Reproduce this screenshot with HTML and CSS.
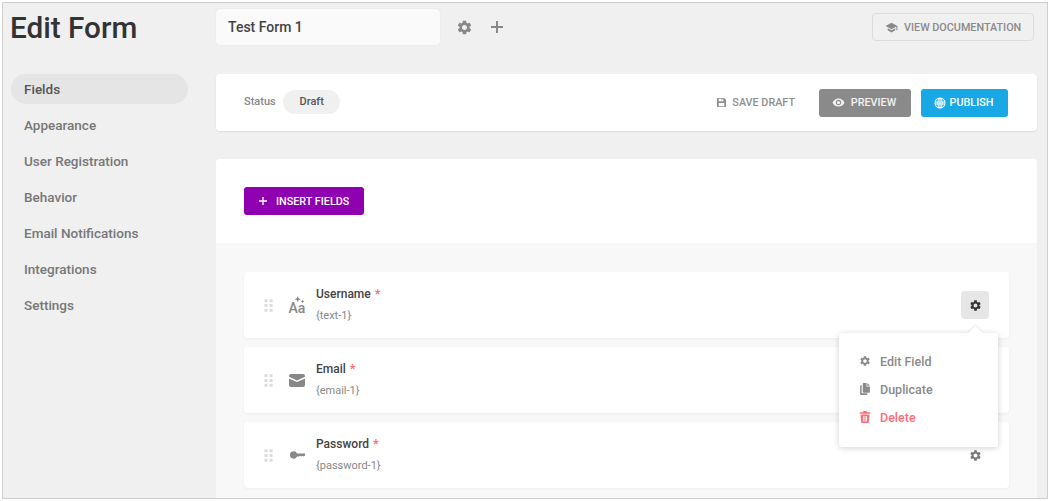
FILE: index.html
```html
<!DOCTYPE html>
<html lang="en">
<head>
<meta charset="utf-8">
<title>Edit Form</title>
<link rel="stylesheet" href="styles.css">
</head>
<body>
<svg class="defs" width="0" height="0" aria-hidden="true">
  <symbol id="gear" viewBox="0 0 24 24"><path d="M19.14 12.94c.04-.3.06-.61.06-.94 0-.32-.02-.64-.07-.94l2.03-1.58c.18-.14.23-.41.12-.61l-1.92-3.32c-.12-.22-.37-.29-.59-.22l-2.39.96c-.5-.38-1.03-.7-1.62-.94l-.36-2.54c-.04-.24-.24-.41-.48-.41h-3.84c-.24 0-.43.17-.47.41l-.36 2.54c-.59.24-1.13.57-1.62.94l-2.39-.96c-.22-.08-.47 0-.59.22L2.74 8.87c-.12.21-.08.47.12.61l2.03 1.58c-.05.3-.09.63-.09.94s.02.64.07.94l-2.03 1.58c-.18.14-.23.41-.12.61l1.92 3.32c.12.22.37.29.59.22l2.39-.96c.5.38 1.03.7 1.62.94l.36 2.54c.05.24.24.41.48.41h3.84c.24 0 .44-.17.47-.41l.36-2.54c.59-.24 1.13-.56 1.62-.94l2.39.96c.22.08.47 0 .59-.22l1.92-3.32c.12-.22.07-.47-.12-.61l-2.01-1.58zM12 15.6c-1.98 0-3.6-1.62-3.6-3.6s1.62-3.6 3.6-3.6 3.6 1.62 3.6 3.6-1.62 3.6-3.6 3.6z"/></symbol>
  <symbol id="plus" viewBox="0 0 12 12"><path d="M5 0h2v5h5v2H7v5H5V7H0V5h5z"/></symbol>
  <symbol id="cap" viewBox="0 0 24 24"><path d="M5 13.18v4L12 21l7-3.82v-4L12 17l-7-3.82zM12 3L1 9l11 6 9-4.91V17h2V9L12 3z"/></symbol>
  <symbol id="save" viewBox="0 0 24 24"><path fill-rule="evenodd" d="M4 2h14l4 4v14a2 2 0 0 1-2 2H4a2 2 0 0 1-2-2V4a2 2 0 0 1 2-2zm2 2v5h10V4h-2v3h-2V4zm0 9v7h12v-7z"/></symbol>
  <symbol id="eye" viewBox="0 0 24 24"><path d="M12 4.500C7 4.500 2.730 7.610 1 12c1.730 4.390 6 7.500 11 7.500s9.270-3.110 11-7.500c-1.730-4.390-6-7.500-11-7.500zM12 17c-2.760 0-5-2.240-5-5s2.240-5 5-5 5 2.240 5 5-2.240 5-5 5zm0-8c-1.660 0-3 1.340-3 3s1.340 3 3 3 3-1.340 3-3-1.340-3-3-3z"/></symbol>
  <symbol id="globe" viewBox="0 0 24 24"><path fill-rule="evenodd" d="M12 1a11 11 0 1 1 0 22 11 11 0 0 1 0-22zM8.900 3.600A9 9 0 0 0 3.200 9h3.700c.3-2 1-3.900 2-5.400zM11 3.200C9.900 4.700 9.100 6.700 8.900 9H11zM13 3.200V9h2.100c-.2-2.300-1-4.300-2.100-5.800zM15.100 3.600c1 1.500 1.700 3.400 2 5.400h3.700a9 9 0 0 0-5.700-5.400zM3 11v2h3.700a22 22 0 0 1 0-2zM8.700 11a18 18 0 0 0 0 2H11v-2zM13 11v2h2.300a18 18 0 0 0 0-2zM17.300 11a22 22 0 0 1 0 2H21v-2zM3.200 15a9 9 0 0 0 5.700 5.400c-1-1.500-1.700-3.400-2-5.400zM8.900 15c.2 2.300 1 4.300 2.100 5.800V15zM13 15v5.800c1.100-1.500 1.900-3.500 2.100-5.800zM17.100 15c-.3 2-1 3.900-2 5.400a9 9 0 0 0 5.700-5.400z"/></symbol>
  <symbol id="grip" viewBox="0 0 10 16"><path d="M.5 1h3.400v3.400H.5zM6.100 1h3.400v3.400H6.100zM.5 6.300h3.400v3.400H.5zM6.100 6.300h3.400v3.400H6.100zM.5 11.600h3.400V15H.5zM6.100 11.600h3.400V15H6.100z"/></symbol>
  <symbol id="sparkle" viewBox="0 0 12 10"><path d="M4 0l1 2.500L7.500 3.500 5 4.500 4 7 3 4.500.5 3.500 3 2.500zM9.500 4l.6 1.400 1.400.6-1.400.6-.6 1.400-.6-1.400L7.500 6l1.400-.6z"/></symbol>
  <symbol id="mail" viewBox="0 0 16 13"><path d="M2 0h12a2 2 0 0 1 2 2v.8L8 6.400 0 2.800V2a2 2 0 0 1 2-2zM0 4.400l8 3.600 8-3.600V11a2 2 0 0 1-2 2H2a2 2 0 0 1-2-2z"/></symbol>
  <symbol id="key" viewBox="0 0 16 8"><path d="M3.800 0a4 4 0 0 1 3.700 2.500H16v2.200l-1.500 1-1.200-.8-1.200.8-1.200-.8-1.200.8H7.500A4 4 0 1 1 3.800 0z"/></symbol>
  <symbol id="copy" viewBox="0 0 14 16"><path d="M5 0h4v4.500h4.500V12a1 1 0 0 1-1 1H5a1 1 0 0 1-1-1V1a1 1 0 0 1 1-1zM10 0l3.500 3.500H10zM2.500 3v10.500H10V16H1.500a1 1 0 0 1-1-1V4a1 1 0 0 1 1-1z"/></symbol>
  <symbol id="trash" viewBox="0 0 14 16"><path fill-rule="evenodd" d="M5 0h4l.7 1.500H14v2H0v-2h4.300zM1 4.500h12l-.8 10.300a1.300 1.300 0 0 1-1.300 1.200H3.100a1.300 1.300 0 0 1-1.300-1.200zM4.300 6.500l.3 7.500h1.200l-.3-7.500zM6.400 6.500V14h1.200V6.500zM8.500 6.500L8.200 14h1.200l.3-7.500z"/></symbol>
</svg>

<div class="frame">
  <aside class="sidebar">
    <h1 class="page-title">Edit Form</h1>
    <nav class="nav">
      <a class="nav-item is-active">Fields</a>
      <a class="nav-item">Appearance</a>
      <a class="nav-item">User Registration</a>
      <a class="nav-item">Behavior</a>
      <a class="nav-item">Email Notifications</a>
      <a class="nav-item">Integrations</a>
      <a class="nav-item">Settings</a>
    </nav>
  </aside>

  <main class="main">
    <header class="toolbar">
      <div class="name-input">Test Form 1</div>
      <svg class="tool-gear"><use href="#gear"/></svg>
      <svg class="tool-plus"><use href="#plus"/></svg>
      <button class="doc-btn"><svg class="doc-icon"><use href="#cap"/></svg>VIEW DOCUMENTATION</button>
    </header>

    <section class="status-card">
      <span class="status-label">Status</span>
      <span class="status-pill">Draft</span>
      <button class="save-btn"><svg class="btn-icon-save"><use href="#save"/></svg>SAVE DRAFT</button>
      <button class="btn btn-preview"><svg class="btn-icon-eye"><use href="#eye"/></svg>PREVIEW</button>
      <button class="btn btn-publish"><svg class="btn-icon-globe"><use href="#globe"/></svg>PUBLISH</button>
    </section>

    <section class="form-card">
      <div class="form-head">
        <button class="insert-btn"><svg class="insert-icon"><use href="#plus"/></svg>INSERT FIELDS</button>
      </div>
      <div class="form-body">
        <div class="field">
          <svg class="grip"><use href="#grip"/></svg>
          <span class="type-icon type-text"><svg class="sparkle"><use href="#sparkle"/></svg><span class="aa">Aa</span></span>
          <div class="field-text">
            <div class="field-label">Username <span class="req">*</span></div>
            <div class="field-tag">{text-1}</div>
          </div>
          <button class="field-gear is-open"><svg><use href="#gear"/></svg></button>
          <div class="menu">
            <div class="menu-item"><svg class="menu-icon"><use href="#gear"/></svg>Edit Field</div>
            <div class="menu-item"><svg class="menu-icon"><use href="#copy"/></svg>Duplicate</div>
            <div class="menu-item is-danger"><svg class="menu-icon"><use href="#trash"/></svg>Delete</div>
          </div>
        </div>
        <div class="field">
          <svg class="grip"><use href="#grip"/></svg>
          <span class="type-icon"><svg class="mail"><use href="#mail"/></svg></span>
          <div class="field-text">
            <div class="field-label">Email <span class="req">*</span></div>
            <div class="field-tag">{email-1}</div>
          </div>
          <button class="field-gear"><svg><use href="#gear"/></svg></button>
        </div>
        <div class="field">
          <svg class="grip"><use href="#grip"/></svg>
          <span class="type-icon"><svg class="key"><use href="#key"/></svg></span>
          <div class="field-text">
            <div class="field-label">Password <span class="req">*</span></div>
            <div class="field-tag">{password-1}</div>
          </div>
          <button class="field-gear"><svg><use href="#gear"/></svg></button>
        </div>
      </div>
    </section>
  </main>
</div>
</body>
</html>
```
FILE: styles.css
```css
* { box-sizing: border-box; }
html, body { margin: 0; padding: 0; height: 100%; background: #fff; overflow: hidden; }
body { font-family: Roboto, "Liberation Sans", sans-serif; padding: 2px; }
.defs { position: absolute; }
button { font-family: inherit; border: 0; cursor: pointer; }
svg { display: block; fill: currentColor; flex: none; }

.frame {
  height: 497px;
  display: flex;
  background: #f0f0f0;
  border: 1px solid #cfcfcf;
  overflow: hidden;
  padding-right: 10px;
}

.sidebar { width: 213px; flex: none; padding-left: 8px; }
.page-title {
  margin: 7px 0 0 -1px;
  font-size: 29.700px;
  line-height: 36px;
  font-weight: 500;
  color: #333;
}
.nav { margin-top: 28px; display: flex; flex-direction: column; gap: 6px; width: 177px; }
.nav-item {
  height: 30px;
  line-height: 30px;
  padding-left: 13px;
  border-radius: 15px;
  font-size: 13.500px;
  font-weight: 500;
  color: #777;
}
.nav-item.is-active { background: #e5e5e5; color: #555; }

.main { flex: 1; min-width: 0; }
.toolbar { display: flex; align-items: center; height: 36px; margin-top: 6px; }
.name-input {
  width: 224px;
  height: 36px;
  line-height: 36px;
  padding-left: 12px;
  background: #fafafa;
  border-radius: 4px;
  box-shadow: 0 0 1px rgba(0,0,0,.15);
  font-size: 14px;
  font-weight: 500;
  color: #444;
}
.tool-gear { width: 17px; height: 17px; margin-left: 16px; color: #888; }
.tool-plus { width: 12px; height: 12px; margin-left: 18px; color: #888; }
.doc-btn {
  margin-left: auto;
  margin-right: 3px;
  width: 162px;
  height: 28px;
  display: flex;
  align-items: center;
  padding-left: 12px;
  background: #f0f0f0;
  border: 1px solid #dcdcdc;
  border-radius: 4px;
  font-size: 10.800px;
  font-weight: 500;
  color: #8a8a8a;
}
.doc-icon { width: 13px; height: 13px; margin-right: 6px; color: #8a8a8a; }

.status-card {
  margin-top: 29px;
  height: 57px;
  display: flex;
  align-items: center;
  padding: 0 29px 0 28px;
  background: #fff;
  border-radius: 4px;
  box-shadow: 0 1px 2px rgba(0,0,0,.08);
}
.status-label { font-size: 11px; font-weight: 500; color: #888; margin-bottom: 2px; }
.status-pill {
  margin-left: 7px;
  margin-bottom: 2px;
  width: 57px;
  height: 24px;
  line-height: 24px;
  padding-left: 1px;
  text-align: center;
  border-radius: 12px;
  background: #f0f0f0;
  font-size: 11px;
  font-weight: 500;
  color: #555;
}
.save-btn {
  margin-left: auto;
  display: flex;
  align-items: center;
  background: none;
  padding: 0;
  font-size: 10.800px;
  font-weight: 500;
  color: #8f8f8f;
}
.btn-icon-save { width: 11px; height: 11px; margin-right: 5px; }
.btn {
  height: 28px;
  display: flex;
  align-items: center;
  justify-content: center;
  padding: 0 2px 0 0;
  border-radius: 3px;
  font-size: 10.800px;
  font-weight: 500;
  color: #fff;
}
.btn-preview { width: 92px; margin-left: 24px; background: #8a8a8a; color: #f2f2f2; }
.btn-publish { width: 87px; margin-left: 10px; background: #17a8e5; }
.btn-icon-eye { width: 13px; height: 13px; margin-right: 6px; }
.btn-icon-globe { width: 12px; height: 12px; margin-right: 4px; }

.form-card {
  margin-top: 28px;
  border-radius: 4px 4px 0 0;
  overflow: hidden;
}
.form-head { height: 84px; background: #fff; padding: 28px; }
.insert-btn {
  width: 120px;
  height: 28px;
  display: flex;
  align-items: center;
  padding-left: 15px;
  background: #8f00b0;
  border-radius: 3px;
  font-size: 10.800px;
  font-weight: 500;
  color: #fff;
}
.insert-icon { width: 8px; height: 8px; margin-right: 9px; }
.form-body {
  height: 260px;
  background: #f8f8f8;
  padding: 29px 28px 0;
  display: flex;
  flex-direction: column;
  gap: 9px;
}

.field {
  position: relative;
  flex: none;
  height: 66px;
  display: flex;
  align-items: center;
  padding-left: 20px;
  background: #fff;
  border-radius: 4px;
  box-shadow: 0 1px 3px rgba(0,0,0,.05);
}
.grip { width: 9px; height: 15px; color: #dcdcdc; }
.type-icon {
  width: 16px;
  margin-left: 16px;
  color: #888;
  display: flex;
  flex-direction: column;
  align-items: center;
}
.sparkle { width: 11px; height: 9px; margin-bottom: -3px; margin-left: 5px; }
.aa { font-size: 14px; line-height: 13px; font-weight: 500; }
.mail { width: 16px; height: 13px; }
.key { width: 15px; height: 8px; }
.field-text { margin-left: 11px; margin-top: -1px; }
.field-label { font-size: 12px; line-height: 16px; font-weight: 500; color: #444; }
.req { color: #ff6d6d; font-size: 13px; margin-left: 1px; }
.field-tag { margin-top: 7px; font-size: 11px; line-height: 14px; color: #888; }
.field-gear {
  margin-left: auto;
  margin-right: 20px;
  width: 28px;
  height: 28px;
  display: flex;
  align-items: center;
  justify-content: center;
  padding: 0;
  background: none;
  border-radius: 4px;
  color: #777;
}
.field-gear svg { width: 13px; height: 13px; }
.field-gear.is-open { background: #e6e6e6; color: #333; }

.menu {
  position: absolute;
  z-index: 2;
  top: 61px;
  left: 595px;
  width: 159px;
  height: 114px;
  padding: 14px 20px;
  background: #fff;
  border-radius: 3px;
  box-shadow: 0 1px 6px rgba(0,0,0,.18);
}
.menu::before {
  content: "";
  position: absolute;
  top: -5px;
  right: 17px;
  width: 11px;
  height: 11px;
  background: #fff;
  transform: rotate(45deg);
  box-shadow: -1px -1px 2px rgba(0,0,0,.08);
}
.menu-item {
  position: relative;
  height: 28px;
  display: flex;
  align-items: center;
  font-size: 12.500px;
  font-weight: 500;
  color: #8a8a8a;
}
.menu-icon { width: 12px; height: 12px; margin-right: 9px; }
.is-danger { color: #ff6d75; }
```
